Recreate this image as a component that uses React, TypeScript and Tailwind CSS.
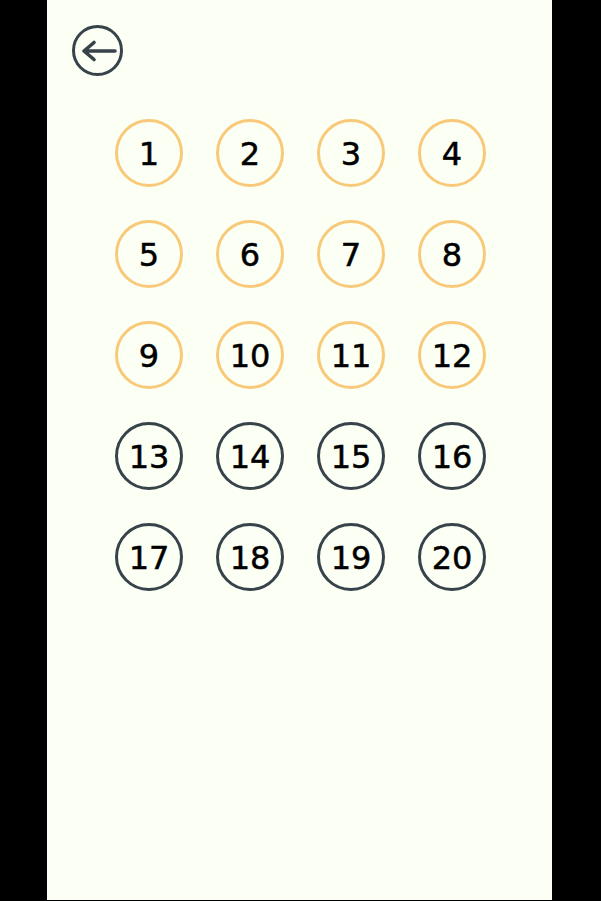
import React from "react";

export default function App() {
  const nums = Array.from({ length: 20 }, (_, i) => i + 1);
  return (
    <div className="w-[601px] h-[901px] bg-black flex">
      <div
        className="ml-[47px] w-[505px] h-[900px] bg-[#fbfff4] flex flex-col"
        style={{ fontFamily: '"DejaVu Sans", Verdana, sans-serif' }}
      >
        <div className="pl-[25px] pt-[25px]">
          <button className="w-[51px] h-[51px] rounded-full border-[3px] border-[#37424a] flex items-center justify-center">
            <svg width="45" height="45" viewBox="0 0 45 45" fill="none">
              <path
                d="M9 23H40M19 14.5L9 23L19 31.5"
                stroke="#37424a"
                strokeWidth="3.6"
                strokeLinecap="round"
                strokeLinejoin="round"
              />
            </svg>
          </button>
        </div>
        <div className="mt-[43px] ml-[68px] grid grid-cols-4 w-fit gap-x-[33px] gap-y-[33px]">
          {nums.map((n) => (
            <div
              key={n}
              className={`w-[68px] h-[68px] rounded-full border-[3.5px] flex items-center justify-center pt-[2px] text-[32px] text-black [-webkit-text-stroke:0.5px_black] ${
                n <= 12 ? "border-[#f9c97a]" : "border-[#37424a]"
              }`}
            >
              {n}
            </div>
          ))}
        </div>
      </div>
    </div>
  );
}
